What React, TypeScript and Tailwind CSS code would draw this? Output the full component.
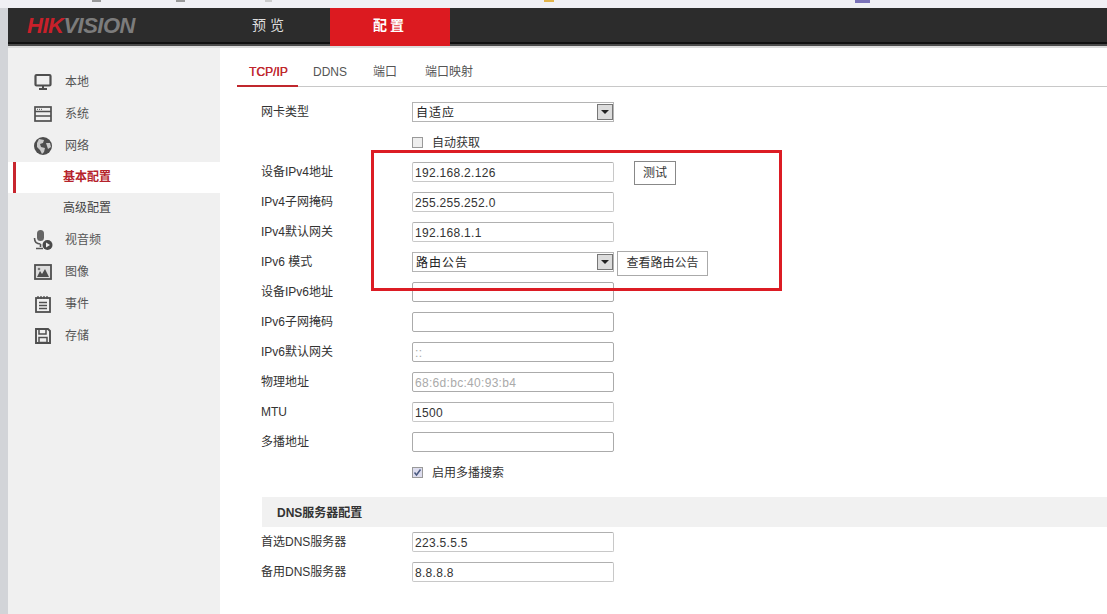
const labelFont = "font-['Liberation_Sans','Noto_Sans_CJK_SC',sans-serif]";

function MonitorIcon() {
  return (
    <svg width="18" height="18" viewBox="0 0 18 18" fill="none" stroke="#4f4f4f">
      <rect x="1.5" y="2" width="15" height="10.5" rx="1" strokeWidth="2.2" />
      <path d="M9 13v2.5M5 16h8" strokeWidth="2" />
    </svg>
  );
}

function WindowIcon() {
  return (
    <svg width="18" height="18" viewBox="0 0 18 18" fill="none" stroke="#4f4f4f">
      <rect x="1" y="2" width="16" height="14" strokeWidth="1.7" />
      <path d="M1 6.5h16M1 11h16" strokeWidth="1.3" />
      <path d="M3 4.3h6" strokeWidth="1" strokeDasharray="1 1" />
    </svg>
  );
}

function GlobeIcon() {
  return (
    <svg width="20" height="20" viewBox="0 0 20 20">
      <circle cx="10" cy="10" r="9" fill="#4d4d4d" />
      <path d="M6 3l5 1-1 3-3 1 1 3 4 1-1 4-2 2-2-4-3-3 0-4zM13 7l4 0 1 4-3 2z" fill="#c9c9c9" />
    </svg>
  );
}

function MicIcon() {
  return (
    <svg width="20" height="22" viewBox="0 0 20 22">
      <rect x="4" y="1" width="7" height="11" rx="3.5" fill="#666" />
      <path d="M1.5 9c0 5 3 6 6 6M7.5 15v3M3 19.5h7" fill="none" stroke="#555" strokeWidth="1.6" />
      <circle cx="14.5" cy="16" r="5" fill="#4a4a4a" />
      <path d="M13 13.5l4 2.5-4 2.5z" fill="#eee" />
    </svg>
  );
}

function ImageIcon() {
  return (
    <svg width="18" height="16" viewBox="0 0 18 16">
      <rect x="1" y="1" width="16" height="14" fill="#ddd" stroke="#4f4f4f" strokeWidth="1.8" />
      <path d="M3 13l3-6 2 3 3-5 4 8z" fill="#4f4f4f" />
      <circle cx="5" cy="5" r="1.3" fill="#777" />
    </svg>
  );
}

function NoteIcon() {
  return (
    <svg width="18" height="18" viewBox="0 0 18 18" fill="none" stroke="#4f4f4f">
      <rect x="2" y="3" width="14" height="14" strokeWidth="1.8" />
      <path d="M4 1v3M7 1v3M10 1v3M13 1v3" strokeWidth="1.3" />
      <path d="M5 7.5h8M5 10.5h8M5 13.5h8" strokeWidth="1.3" />
    </svg>
  );
}

function SaveIcon() {
  return (
    <svg width="18" height="18" viewBox="0 0 18 18" fill="none" stroke="#4f4f4f">
      <path d="M2 2h12l2 2v12H2z" strokeWidth="1.9" />
      <path d="M5 2v5h7V2" strokeWidth="1.5" />
      <rect x="5" y="10.5" width="8" height="5" strokeWidth="1.5" />
    </svg>
  );
}

const menu = [
  { label: "本地", icon: <MonitorIcon /> },
  { label: "系统", icon: <WindowIcon /> },
  { label: "网络", icon: <GlobeIcon /> },
  { label: "基本配置", active: true },
  { label: "高级配置", sub: true },
  { label: "视音频", icon: <MicIcon /> },
  { label: "图像", icon: <ImageIcon /> },
  { label: "事件", icon: <NoteIcon /> },
  { label: "存储", icon: <SaveIcon /> },
];

function SideItem({ item }: { item: (typeof menu)[number] }) {
  if (item.active) {
    return (
      <div className="flex h-[31px] items-center bg-white">
        <div className="ml-[5px] h-full w-[3px] bg-[#c8262e]" />
        <span className="mb-[2px] ml-[47px] text-[12px] font-bold text-[#b5232b]">{item.label}</span>
      </div>
    );
  }
  if (item.sub) {
    return (
      <div className="flex h-[31px] items-center pb-[2px]">
        <span className="ml-[55px] text-[12px] text-[#444]">{item.label}</span>
      </div>
    );
  }
  return (
    <div className="flex h-8 items-center">
      <div className="ml-[25px] flex w-[20px] justify-center">{item.icon}</div>
      <span className="ml-[12px] text-[12px] text-[#555]">{item.label}</span>
    </div>
  );
}

function TextRow({ label, value, muted, children }: { label: string; value?: string; muted?: boolean; children?: React.ReactNode }) {
  const empty = !value || muted;
  return (
    <div className="flex h-[30px] items-center">
      <div className="w-[151px] text-[12px] text-[#333]">{label}</div>
      <div className={`flex h-5 w-[202px] items-center rounded-[2px] border pl-[2px] pt-px text-[12px] tracking-[0.3px] ${empty ? "border-[#ababab]" : "border-[#c8c8c8] border-t-[#b0b0b0]"} ${muted ? "text-[#aaa]" : "text-[#333]"}`}>
        {value}
      </div>
      {children}
    </div>
  );
}

function SelectBox({ value }: { value: string }) {
  return (
    <div className="flex h-5 w-[202px] items-center justify-between border border-[#b4b4b4] pl-[3px] text-[12px] tracking-[1px] text-[#222]">
      <span className="pt-px">{value}</span>
      <div className="flex h-[16px] w-[16px] items-center justify-center border border-[#777] bg-[#dcdcdc]">
        <div className="h-0 w-0 border-x-[4px] border-t-[4px] border-x-transparent border-t-[#222]" />
      </div>
    </div>
  );
}

export default function App() {
  return (
    <div className={`relative flex h-[614px] w-[1107px] flex-col overflow-hidden bg-white ${labelFont}`}>
      <div className="flex h-2 items-start bg-[#f0f0f4]">
        <span className="ml-[92px] h-[2px] w-[9px] bg-[#999]" />
        <span className="ml-[75px] h-[2px] w-[9px] bg-[#999]" />
        <span className="ml-[80px] h-[2px] w-[7px] bg-[#ccc]" />
        <span className="ml-[272px] h-[2px] w-[10px] bg-[#e2b44a]" />
        <span className="ml-[301px] h-[3px] w-[15px] bg-[#7a72b8]" />
      </div>
      <div className="flex min-h-0 flex-1">
        <div className="w-2 bg-[#d2d4d8]" />
        <div className="flex min-w-0 flex-1 flex-col">
          <header className="flex h-[38px] bg-[#2c2c2c] shadow-[inset_0_-2px_0_#4a4a4a,inset_0_-4px_0_#111]">
            <div className="flex h-[34px] w-[242px] items-center pl-[19px] text-[22px] font-bold italic tracking-[-0.5px]">
              <span className="text-[#c8202a]">HIK</span>
              <span className="text-[#7c7c7c]">VISION</span>
            </div>
            <div className="flex h-[34px] w-[80px] items-center pl-[2px] text-[14px] tracking-[4px] text-[#ddd]">预览</div>
            <div className="flex h-full w-[120px] items-center justify-center bg-[#dc1a20] pb-[3px] text-[14px] font-bold tracking-[3px] text-white">配置</div>
          </header>
          <div className="h-[2px] bg-[#dcdcdc]" />
          <div className="flex min-h-0 flex-1">
            <aside className="w-[212px] bg-[#f0f0f0] pt-[18px]">
              {menu.map((item) => (
                <SideItem key={item.label} item={item} />
              ))}
            </aside>
            <main className="min-w-0 flex-1 pl-[17px]">
              <nav className="flex h-[39px] items-stretch border-b border-[#c8c8c8] text-[12px] leading-[14px] text-[#555]">
                <div className="-mb-px w-[61px] border-b-2 border-[#c0272d] pl-[12px] pt-[17px] text-[#c0272d] [text-shadow:0.3px_0_0_#c0272d]">TCP/IP</div>
                <div className="ml-[15px] pt-[17px]">DDNS</div>
                <div className="ml-[26px] pt-[17px]">端口</div>
                <div className="ml-[28px] pt-[17px]">端口映射</div>
              </nav>
              <div className="pl-[24px] pt-[10px]">
                <div className="flex h-[30px] items-center">
                  <div className="w-[151px] text-[12px] text-[#333]">网卡类型</div>
                  <SelectBox value="自适应" />
                </div>
                <div className="flex h-[30px] items-center pl-[151px]">
                  <div className="h-[11px] w-[11px] border border-[#999] bg-[#eee]" />
                  <span className="ml-[9px] pt-px text-[12px] text-[#333]">自动获取</span>
                </div>
                <TextRow label="设备IPv4地址" value="192.168.2.126">
                  <div className="ml-[20px] mt-[2px] flex h-[24px] w-[42px] items-center justify-center border border-[#888] text-[12px] text-[#333]">测试</div>
                </TextRow>
                <TextRow label="IPv4子网掩码" value="255.255.252.0" />
                <TextRow label="IPv4默认网关" value="192.168.1.1" />
                <div className="flex h-[30px] items-center">
                  <div className="w-[151px] text-[12px] text-[#333]">IPv6 模式</div>
                  <SelectBox value="路由公告" />
                  <div className="ml-[3px] mt-[2px] flex h-[25px] w-[91px] items-center justify-center border border-[#aaa] text-[12px] text-[#333]">查看路由公告</div>
                </div>
                <TextRow label="设备IPv6地址" />
                <TextRow label="IPv6子网掩码" />
                <TextRow label="IPv6默认网关" value="::" muted />
                <TextRow label="物理地址" value="68:6d:bc:40:93:b4" muted />
                <TextRow label="MTU" value="1500" />
                <TextRow label="多播地址" />
                <div className="flex h-[30px] items-center pl-[151px]">
                  <div className="flex h-[11px] w-[11px] items-center justify-center border border-[#999] bg-[#dde]">
                    <svg width="9" height="9" viewBox="0 0 9 9" fill="none" stroke="#4a5a80" strokeWidth="1.5">
                      <path d="M1.5 4.5l2 2.5 4-5.5" />
                    </svg>
                  </div>
                  <span className="ml-[9px] pt-px text-[12px] text-[#333]">启用多播搜索</span>
                </div>
                <div className="ml-px mt-[10px] flex h-[30px] items-center bg-[#f1f1f1] pl-[15px] pt-px text-[12px] font-bold text-[#333]">DNS服务器配置</div>
                <TextRow label="首选DNS服务器" value="223.5.5.5" />
                <TextRow label="备用DNS服务器" value="8.8.8.8" />
              </div>
            </main>
          </div>
        </div>
      </div>
      <div className="absolute left-[371px] top-[150px] h-[141px] w-[411px] border-[3px] border-[#dc1c24]" />
    </div>
  );
}
